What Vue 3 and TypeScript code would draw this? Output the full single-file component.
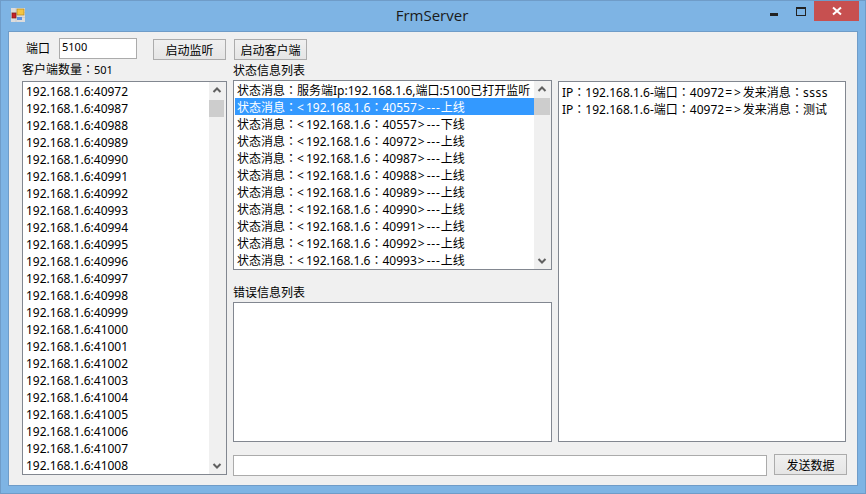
<script setup lang="ts">
const clients: string[] = [40972, 40987, 40988, 40989, 40990, 40991, 40992, 40993, 40994, 40995, 40996, 40997, 40998, 40999, 41000, 41001, 41002, 41003, 41004, 41005, 41006, 41007, 41008].map((p) => `192.168.1.6:${p}`)
const statusRows: { port: number; verb: string }[] = [
  { port: 40557, verb: '上线' },
  { port: 40557, verb: '下线' },
  { port: 40972, verb: '上线' },
  { port: 40987, verb: '上线' },
  { port: 40988, verb: '上线' },
  { port: 40989, verb: '上线' },
  { port: 40990, verb: '上线' },
  { port: 40991, verb: '上线' },
  { port: 40992, verb: '上线' },
  { port: 40993, verb: '上线' },
]
</script>

<template>
  <div class="window">
    <header class="titlebar">
      <svg class="app-icon" width="14" height="14" viewBox="0 0 14 14">
        <rect x="0" y="0" width="14" height="14" fill="#dcdcdc" />
        <path d="M5 0 V14 M0 4.500 H14 M0 9.500 H14" stroke="#c4c4c4" stroke-width="0.6" />
        <rect x="6" y="1" width="7" height="6" fill="#f5c542" stroke="#b58a1c" stroke-width="0.7" />
        <rect x="1" y="5" width="4" height="5" fill="#c8202a" stroke="#7c1a1a" stroke-width="0.7" />
        <rect x="6" y="9" width="5" height="3" fill="#5b8fe0" />
      </svg>
      <div class="title">FrmServer</div>
      <div class="controls">
        <div class="ctl"><span class="min"></span></div>
        <div class="ctl"><span class="max"></span></div>
        <div class="close">
          <svg width="10" height="10" viewBox="0 0 10 10"><path d="M1 1.500 L9 8.500 M9 1.500 L1 8.500" stroke="#fff" stroke-width="2" /></svg>
        </div>
      </div>
    </header>

    <main class="client">
      <div class="toolbar">
        <label class="port-label">端口</label>
        <input class="port" value="5100" />
        <button class="btn b1">启动监听</button>
        <button class="btn b2">启动客户端</button>
      </div>

      <div class="columns">
        <section class="col-left">
          <div class="label count">客户端数量<span class="fw">：</span><span class="num">501</span></div>
          <div class="list client-list">
            <div class="rows">
              <div v-for="c in clients" :key="c" class="row">{{ c }}</div>
            </div>
            <div class="scroll">
              <svg class="arrow" width="17" height="17" viewBox="0 0 17 17"><path d="M4.500 10 L8 6.500 L11.500 10" fill="none" stroke="#606060" stroke-width="2" /></svg>
              <div class="thumb"></div>
              <div class="track"></div>
              <svg class="arrow" width="17" height="17" viewBox="0 0 17 17"><path d="M4.500 7 L8 10.500 L11.500 7" fill="none" stroke="#606060" stroke-width="2" /></svg>
            </div>
          </div>
        </section>

        <section class="col-mid">
          <div class="label status-label">状态信息列表</div>
          <div class="list status-list">
            <div class="rows">
              <div class="row">状态消息<span class="fw">：</span>服务端Ip:192.168.1.6,端口:5100已打开监听</div>
              <div v-for="(r, i) in statusRows" :key="i" class="row" :class="{ selected: i === 0 }">状态消息<span class="fw">：</span><span class="lt">&lt;</span>192.168.1.6<span class="fw">：</span>{{ r.port }}<span class="gt">&gt;</span><span class="dash">---</span>{{ r.verb }}</div>
            </div>
            <div class="scroll">
              <svg class="arrow" width="17" height="17" viewBox="0 0 17 17"><path d="M4.500 10 L8 6.500 L11.500 10" fill="none" stroke="#606060" stroke-width="2" /></svg>
              <div class="thumb flush"></div>
              <div class="track"></div>
              <svg class="arrow" width="17" height="17" viewBox="0 0 17 17"><path d="M4.500 7 L8 10.500 L11.500 7" fill="none" stroke="#606060" stroke-width="2" /></svg>
            </div>
          </div>
          <div class="label error-label">错误信息列表</div>
          <div class="list error-list"></div>
        </section>

        <section class="col-right">
          <div class="list msg-list">
            <div class="row">IP<span class="fw">：</span>192.168.1.6-端口<span class="fw">：</span>40972<span class="arrow-txt">=&gt;</span>发来消息<span class="fw">：</span><span class="ssss">ssss</span></div>
            <div class="row">IP<span class="fw">：</span>192.168.1.6-端口<span class="fw">：</span>40972<span class="arrow-txt">=&gt;</span>发来消息<span class="fw">：</span>测试</div>
          </div>
        </section>
      </div>

      <div class="send-bar">
        <input class="send-input" />
        <button class="btn send">发送数据</button>
      </div>
    </main>
  </div>
</template>

<style>
html, body { margin: 0; padding: 0; background: #7eb4e4; }
</style>

<style scoped>
.window {
  width: 866px;
  height: 494px;
  box-sizing: border-box;
  background: #7eb4e4;
  border: 1px solid #6f9cc8;
  display: flex;
  flex-direction: column;
  font-family: "Noto Sans", "Noto Sans CJK SC", sans-serif;
  font-size: 12px;
  color: #000;
  overflow: hidden;
}
.titlebar {
  height: 30px;
  flex: none;
  display: flex;
  align-items: flex-start;
}
.app-icon { margin: 7px 0 0 10px; flex: none; }
.title {
  flex: 1;
  text-align: center;
  font-family: "Open Sans", sans-serif;
  font-size: 15px;
  line-height: 28px;
  color: #1a1a1a;
  padding-left: 79px;
}
.controls { display: flex; flex: none; align-items: flex-start; margin-right: 6px; }
.ctl { width: 27px; height: 20px; display: flex; justify-content: center; }
.min { width: 8px; height: 3px; background: #222; margin-top: 12px; }
.max { box-sizing: border-box; width: 10px; height: 9px; border: 1px solid #222; border-top-width: 2px; margin-top: 6px; }
.close {
  width: 45px;
  height: 20px;
  background: #c75050;
  display: flex;
  align-items: center;
  justify-content: center;
}
.client {
  flex: 1;
  margin: 0 7px 7px 7px;
  background: #f0f0f0;
  border: 1px solid #6f9cc8;
  display: flex;
  flex-direction: column;
  padding: 0 10px 10px 13px;
  min-height: 0;
}
.toolbar {
  height: 28px;
  flex: none;
  display: flex;
  align-items: flex-start;
}
.port-label { margin: 9px 0 0 4px; line-height: 16px; width: 33px; flex: none; }
.port {
  box-sizing: border-box;
  width: 78px;
  height: 21px;
  margin-top: 6px;
  padding: 0 0 4px 2px;
  border: 1px solid #ababab;
  background: #fff;
  font: inherit;
  font-size: 11px;
  outline: none;
}
.btn {
  box-sizing: border-box;
  padding: 0;
  border: 1px solid #acacac;
  background: linear-gradient(#f0f0f0, #e5e5e5);
  font: inherit;
  color: #000;
}
.b1 { width: 73px; height: 21px; margin: 7px 0 0 16px; }
.b2 { width: 73px; height: 21px; margin: 7px 0 0 8px; }
.columns { display: flex; height: 415px; flex: none; gap: 6px; }
.label { line-height: 16px; white-space: nowrap; }
.fw { font-family: "Noto Sans CJK JP", sans-serif; }
.lt { margin-right: 2px; }
.gt { margin-left: 1px; margin-right: 2px; }
.dash { letter-spacing: 0.8px; }
.arrow-txt { letter-spacing: 2px; margin-left: 1px; }
.ssss { letter-spacing: 0.5px; }
.list {
  box-sizing: border-box;
  border: 1px solid #828790;
  background: #fff;
  overflow: hidden;
}
.col-left { width: 205px; flex: none; display: flex; flex-direction: column; }
.count { height: 21px; padding-top: 1px; box-sizing: border-box; flex: none; }
.num { font-size: 11px; }
.client-list { height: 394px; flex: none; display: flex; }
.rows { flex: 1; min-width: 0; overflow: hidden; }
.row { height: 17px; line-height: 17px; padding-left: 3px; white-space: nowrap; }
.client-list .rows { padding-top: 1px; box-sizing: border-box; }
.scroll {
  width: 17px;
  flex: none;
  background: #f0f0f0;
  display: flex;
  flex-direction: column;
}
.arrow { display: block; flex: none; }
.thumb { height: 17px; width: 15px; background: #cdcdcd; flex: none; margin-top: 1px; }
.thumb.flush { margin-top: 0; width: 16px; }
.track { flex: 1; }
.col-mid { width: 319px; flex: none; display: flex; flex-direction: column; }
.status-label { height: 20px; padding-top: 3px; box-sizing: border-box; flex: none; }
.status-list { height: 190px; flex: none; display: flex; }
.status-list .rows { padding: 0 0 0 1px; }
.status-list .row { padding-left: 2px; }
.selected { background: #3399ff; color: #fff; }
.error-label { margin-top: 15px; height: 17px; flex: none; }
.error-list { height: 140px; flex: none; }
.col-right { width: 288px; flex: none; padding-top: 21px; box-sizing: border-box; }
.msg-list { height: 361px; padding-top: 1px; }
.msg-list .row { padding-left: 3px; }
.send-bar { display: flex; align-items: flex-start; margin-top: -21px; padding-left: 211px; }
.send-input {
  box-sizing: border-box;
  width: 535px;
  height: 21px;
  margin-top: 1px;
  border: 1px solid #ababab;
  background: #fff;
  outline: none;
}
.send { width: 73px; height: 21px; margin-left: 7px; }
</style>
